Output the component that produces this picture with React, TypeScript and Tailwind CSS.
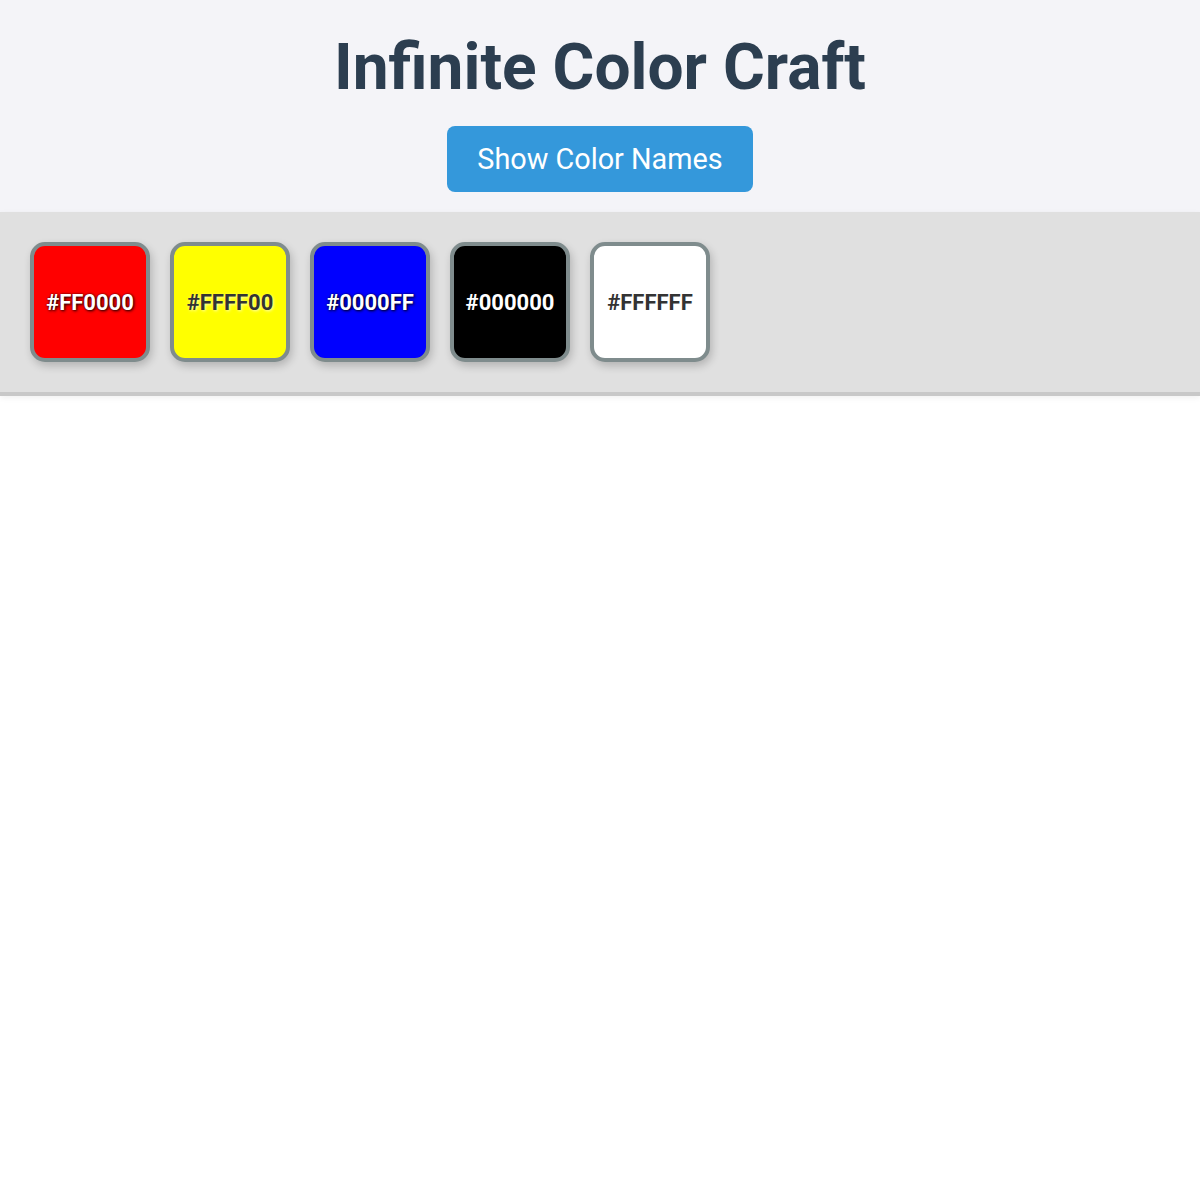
import React from "react";

const colors = [
  { hex: "#FF0000", bg: "bg-[#ff0000]", text: "text-white [text-shadow:1px_1px_3px_rgba(0,0,0,0.9),0_0_2px_rgba(0,0,0,0.6)]" },
  { hex: "#FFFF00", bg: "bg-[#ffff00]", text: "text-[#333333] [text-shadow:1px_1px_3px_rgba(255,255,255,0.7)]" },
  { hex: "#0000FF", bg: "bg-[#0000ff]", text: "text-white [text-shadow:1px_1px_3px_rgba(0,0,0,0.9),0_0_2px_rgba(0,0,0,0.6)]" },
  { hex: "#000000", bg: "bg-[#000000]", text: "text-white [text-shadow:1px_1px_3px_rgba(0,0,0,0.9)]" },
  { hex: "#FFFFFF", bg: "bg-[#ffffff]", text: "text-[#333333]" },
];

export default function App() {
  return (
    <div className="min-h-[1200px] bg-white font-['Roboto',sans-serif]">
      <header className="bg-[#f4f4f8] flex flex-col items-center pt-[30px] pb-[20px]">
        <h1 className="text-[64px] font-bold text-[#2c3e50] leading-[76px]">Infinite Color Craft</h1>
        <button className="mt-[20px] bg-[#3498db] text-white text-[28.8px] leading-[34px] px-[30px] py-[16px] rounded-[8px]">
          Show Color Names
        </button>
      </header>
      <div className="bg-[#e0e0e0] border-b-4 border-[#c8c8c8] p-[30px] flex gap-[20px] shadow-[0_2px_6px_rgba(0,0,0,0.06)]">
        {colors.map((c) => (
          <div
            key={c.hex}
            className={`w-[120px] h-[120px] rounded-[15px] border-4 border-[#7f8c8d] ${c.bg} flex items-center justify-center shadow-[2px_4px_8px_rgba(0,0,0,0.2)]`}
          >
            <span className={`text-[22px] font-bold ${c.text}`}>{c.hex}</span>
          </div>
        ))}
      </div>
    </div>
  );
}
